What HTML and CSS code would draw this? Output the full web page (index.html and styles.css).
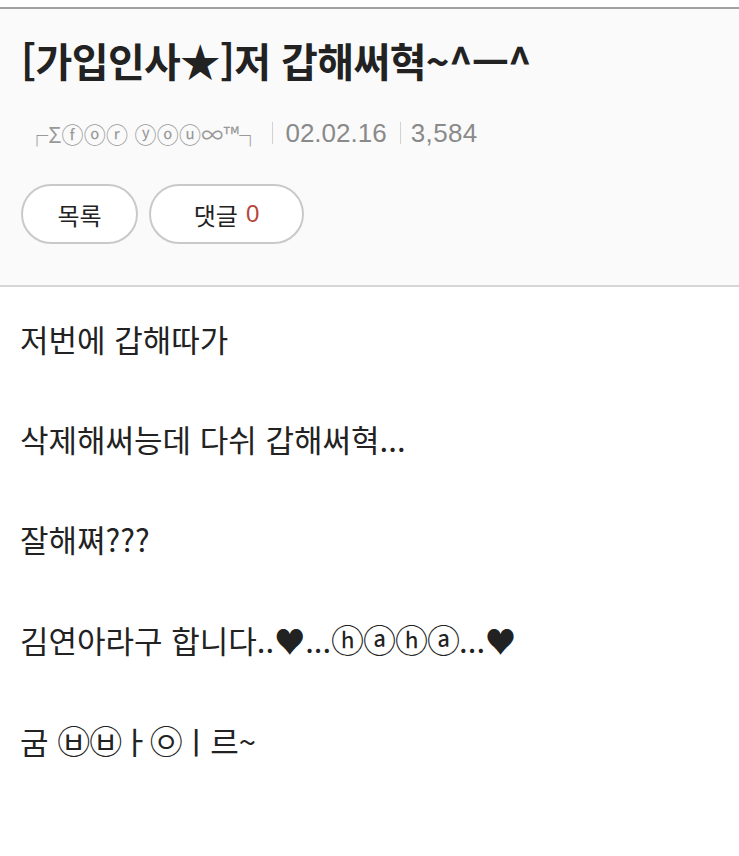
FILE: index.html
```html
<!DOCTYPE html>
<html lang="ko">
<head>
<meta charset="utf-8">
<link rel="stylesheet" href="styles.css">
</head>
<body>
<div class="topline"></div>
<header class="head">
  <h1 class="title">[가입인사★]저 갑해써혁~^ㅡ^</h1>
  <div class="meta">
    <span class="author">┌Σⓕⓞⓡ ⓨⓞⓤ∞™┐</span>
    <span class="sep"></span>
    <span class="date">02.02.16</span>
    <span class="sep"></span>
    <span class="views">3,584</span>
  </div>
  <div class="buttons">
    <span class="btn btn-list">목록</span>
    <span class="btn btn-comment">댓글 <em class="count">0</em></span>
  </div>
</header>
<main class="content">
  <p>저번에 갑해따가</p>
  <p>삭제해써능데 다쉬 갑해써혁...</p>
  <p>잘해쪄???</p>
  <p>김연아라구 합니다..♥...<span class="circ">ⓗⓐⓗⓐ</span>...♥</p>
  <p>굼 <span class="circ">㉥㉥</span>ㅏ<span class="circ">㉧</span>ㅣ르~</p>
</main>
</body>
</html>
```

FILE: styles.css
```css
* { box-sizing: border-box; }
html, body {
  margin: 0;
  padding: 0;
  background: #ffffff;
  font-family: "Noto Sans CJK KR", "Noto Sans", sans-serif;
  color: #222;
}
.topline {
  margin-top: 7px;
  height: 2px;
  background: #a2a2a2;
}
.head {
  background: #fafafa;
  border-bottom: 2px solid #d6d6d6;
  padding: 27px 20px 41px 21px;
}
.title {
  margin: 0;
  font-size: 40px;
  font-weight: 700;
  line-height: 48px;
  color: #222;
  letter-spacing: -0.6px;
}
.meta {
  margin-top: 34px;
  display: flex;
  align-items: center;
  font-family: "Liberation Sans", "Noto Sans CJK KR", sans-serif;
  font-size: 26px;
  color: #8a8a8a;
  line-height: 30px;
  padding-left: 5px;
}
.author {
  font-size: 22px;
  color: #999;
  font-family: "Noto Sans CJK KR", sans-serif;
  letter-spacing: 0.2px;
}
.sep {
  width: 1px;
  height: 22px;
  background: #d3d3d3;
  margin: 0 12px 0 11px;
}
.date + .sep { margin: 0 10px 0 13px; }
.views { letter-spacing: 0.4px; }
.buttons {
  margin-top: 36px;
  display: flex;
  gap: 11px;
}
.btn {
  display: inline-flex;
  align-items: center;
  justify-content: center;
  height: 60px;
  border: 2px solid #c9c9c9;
  border-radius: 30px;
  background: #fff;
  font-size: 24px;
  color: #222;
}
.btn-list { width: 117px; }
.btn-comment { width: 155px; }
.count {
  font-style: normal;
  color: #b5483c;
  font-family: "Liberation Sans", sans-serif;
  margin-left: 8px;
}
.content {
  padding: 22px 20px 0 20px;
}
.content p {
  margin: 0 0 40px 0;
  font-size: 31px;
  line-height: 60px;
  color: #222;
}
.circ {
  font-size: 33px;
  letter-spacing: -1px;
}
```
